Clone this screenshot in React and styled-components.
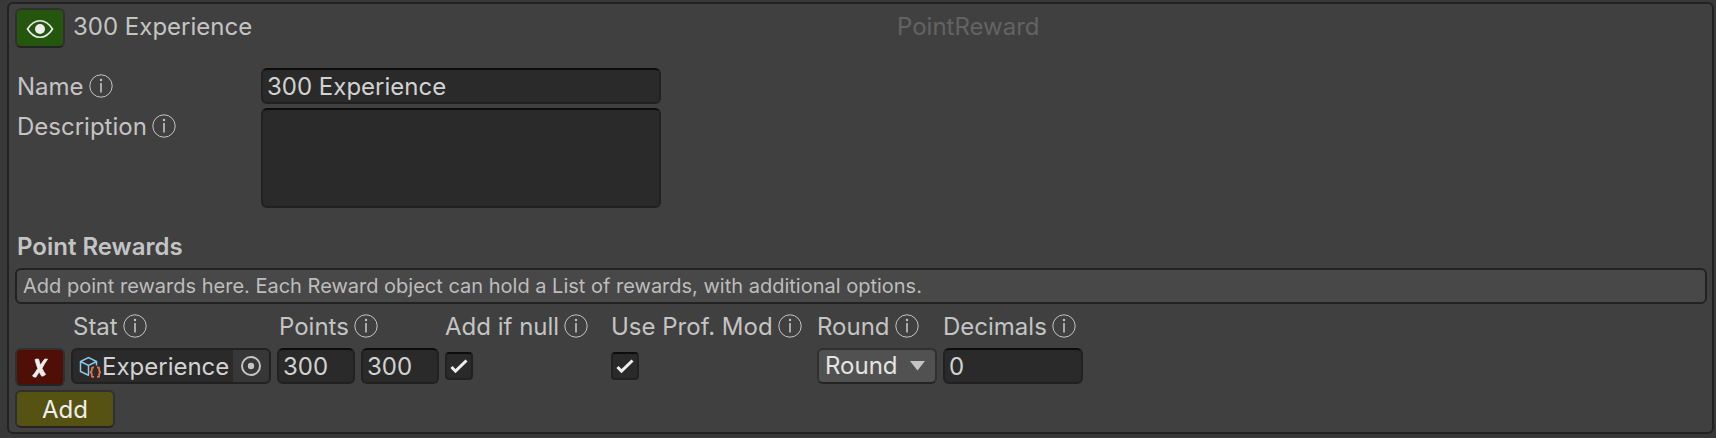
import React, { useState } from 'react'
import styled, { createGlobalStyle } from 'styled-components'

const GlobalStyle = createGlobalStyle`
  * {
    box-sizing: border-box;
  }

  body {
    margin: 0;
    background-color: #383838;
    color: #c4c4c4;
    font-family: Inter, 'Liberation Sans', sans-serif;
    font-size: 24px;
    line-height: 38px;
  }

  button,
  input,
  select,
  textarea {
    margin: 0;
    color: inherit;
    font: inherit;
  }
`

const Panel = styled.main`
  display: flex;
  flex-direction: column;
  gap: 20px;
  margin: 2px 2px 2px 7px;
  padding: 4px 5px 4px 6px;
  border: 2px solid #222;
  border-radius: 6px;
  background-color: #404040;
`

const Header = styled.header`
  display: grid;
  grid-template-columns: 50px 1fr 1fr;
  gap: 6px;
`

const Title = styled.h1`
  margin: 0;
  padding-left: 2px;
  font-size: 24px;
  font-weight: 400;
`

const TypeName = styled.span`
  padding-left: 5px;
  color: #636363;
`

const Button = styled.button`
  display: flex;
  align-items: center;
  justify-content: center;
  width: ${({ $width }) => $width || 50}px;
  height: ${({ $height }) => $height || 38}px;
  padding: 2px 0 0;
  border: 2px solid #303030;
  border-bottom-color: #242424;
  border-radius: 6px;
  background-color: ${({ $color }) => $color};
  color: #eee;
`

const Fields = styled.div`
  display: grid;
  grid-template-columns: 240px 400px;
  gap: 4px 6px;
`

const Label = styled.label`
  display: flex;
  align-self: start;
  gap: 5px;
  height: 36px;
  padding-left: ${({ $flush }) => ($flush ? 0 : 2)}px;
  white-space: nowrap;

  svg {
    margin-top: 6px;
  }
`

const Input = styled.input`
  width: 100%;
  min-width: 0;
  height: 36px;
  padding: 2px 4px 0;
  border: 2px solid #212121;
  border-top-color: #0d0d0d;
  border-radius: 6px;
  outline: none;
  background-color: #2a2a2a;
  color: #d2d2d2;
`

const TextArea = styled(Input)`
  display: block;
  height: 100px;
  resize: none;
`

const Section = styled.section`
  display: flex;
  flex-direction: column;
  gap: 4px;
`

const SectionTitle = styled.h2`
  height: 36px;
  margin: 0;
  padding-left: 2px;
  font-size: 24px;
  font-weight: 600;
`

const HelpBox = styled.p`
  margin: 0;
  padding: 0 6px;
  border: 2px solid #222;
  border-radius: 6px;
  background-color: #484848;
  color: #bdbdbd;
  font-size: 20px;
  line-height: 32px;
`

const Rewards = styled.div`
  display: grid;
  grid-template-columns: 50px 200px 162px 160px 200px 120px 140px;
  gap: 4px 6px;
`

const PointInputs = styled.div`
  display: grid;
  grid-template-columns: 1fr 1fr;
  gap: 6px;
`

const ObjectField = styled.div`
  display: flex;
  height: 36px;
  overflow: hidden;
  border: 2px solid #212121;
  border-radius: 6px;
  background-color: #2a2a2a;
  color: #d2d2d2;
`

const ObjectName = styled.span`
  display: flex;
  flex: 1;
  align-items: center;
  gap: 1px;
  padding: 2px 0 0 6px;
`

const Picker = styled.button`
  display: flex;
  align-items: center;
  justify-content: center;
  width: 36px;
  padding: 0;
  border: 0;
  background-color: #373737;
`

const Toggle = styled.span`
  display: grid;
  align-self: start;
  width: 28px;
  height: 28px;
  margin: 4px 0;

  > * {
    grid-area: 1 / 1;
  }

  svg {
    pointer-events: none;
  }
`

const Checkbox = styled.input`
  width: 28px;
  height: 28px;
  appearance: none;
  border: 2px solid #212121;
  border-top-color: #0d0d0d;
  border-radius: 4px;
  background-color: #2a2a2a;

  &:not(:checked) + svg {
    display: none;
  }
`

const Dropdown = styled.span`
  display: grid;
  align-items: center;
  height: 36px;

  > * {
    grid-area: 1 / 1;
  }

  svg {
    justify-self: end;
    margin-right: 12px;
    pointer-events: none;
  }
`

const Select = styled.select`
  width: 100%;
  height: 36px;
  padding: 0 6px 1px;
  appearance: none;
  border: 2px solid #303030;
  border-bottom-color: #242424;
  border-radius: 6px;
  background-color: #515151;
  color: #e4e4e4;
  line-height: 30px;
`

const InfoIcon = () => (
  <svg width="24" height="24" viewBox="0 0 24 24" fill="none" stroke="#c4c4c4">
    <circle cx="12" cy="12" r="11.2" />
    <path d="M12 9v9.5" strokeWidth="1.6" />
    <circle cx="12" cy="6" r="1.2" fill="#c4c4c4" stroke="none" />
  </svg>
)

const EyeIcon = () => (
  <svg width="28" height="20" viewBox="0 0 28 20" fill="none">
    <path
      d="M1.500 10C5 4.500 9 1.700 14 1.700S23 4.500 26.500 10C23 15.500 19 18.300 14 18.300S5 15.500 1.500 10Z"
      stroke="#eee"
      strokeWidth="1.6"
    />
    <circle cx="14" cy="10" r="5" fill="#eee" />
  </svg>
)

const CrossIcon = () => (
  <svg
    width="16"
    height="20"
    viewBox="0 0 16 20"
    fill="#eee"
    stroke="#eee"
    strokeWidth="0.8"
  >
    <path d="M3 1.500Q5.200 .600 6.600 1.200Q7.400 4.500 8.500 7.200Q10.500 3.500 12.800 1L15.500 1.200Q12.500 5.500 10 10.200Q11.300 13.500 13.600 16.400Q11.600 18 9.800 18.200Q8.300 16.300 7.300 13.800Q5.600 16.500 3.800 19.200Q2 19.200 .500 18Q3.500 14.300 5.800 10.400Q4.200 6.300 3 1.500Z" />
  </svg>
)

const CheckIcon = () => (
  <svg width="28" height="28" viewBox="0 0 28 28" fill="none">
    <path d="M6.500 15l4 4.200L21.500 8.500" stroke="#eee" strokeWidth="3" />
  </svg>
)

const ArrowIcon = () => (
  <svg width="15" height="10" viewBox="0 0 15 10">
    <path d="M0 0h15L7.500 9.500Z" fill="#c4c4c4" />
  </svg>
)

const PickerIcon = () => (
  <svg width="22" height="22" viewBox="0 0 22 22" fill="none">
    <circle cx="11" cy="11" r="9" stroke="#c4c4c4" strokeWidth="2" />
    <circle cx="11" cy="11" r="3.2" fill="#c4c4c4" />
  </svg>
)

const AssetIcon = () => (
  <svg width="22" height="22" viewBox="0 0 22 22" fill="none">
    <path
      d="M10 19.500L1.500 15.500V5.500L9.500 1.500L17.500 5.500V9.500M1.500 5.500L9.500 9.500L17.500 5.500M9.500 9.500V19"
      stroke="#8cc8ee"
      strokeWidth="1.5"
    />
    <path
      d="M15 11.500h-1.200q-1 0-1 1v2.300l-1.300 1.400 1.300 1.400v2.300q0 1 1 1H15M18 11.500h1.200q1 0 1 1v2.300l1.300 1.400-1.300 1.400v2.300q0 1-1 1H18"
      stroke="#e8703f"
      strokeWidth="1.8"
    />
  </svg>
)

const CheckToggle = ({ id }) => (
  <Toggle>
    <Checkbox type="checkbox" id={id} defaultChecked />
    <CheckIcon />
  </Toggle>
)

const columns = [
  { id: 'stat', title: 'Stat' },
  { id: 'points', title: 'Points' },
  { id: 'addIfNull', title: 'Add if null', flush: true },
  { id: 'profMod', title: 'Use Prof. Mod', flush: true },
  { id: 'round', title: 'Round', flush: true },
  { id: 'decimals', title: 'Decimals', flush: true },
]

const App = () => {
  const [name, setName] = useState('300 Experience')

  return (
    <>
      <GlobalStyle />
      <Panel>
        <Header>
          <Button $color="#24560e" $height={40} aria-label="Show">
            <EyeIcon />
          </Button>
          <Title>{name}</Title>
          <TypeName>PointReward</TypeName>
        </Header>

        <Fields>
          <Label htmlFor="name">
            Name <InfoIcon />
          </Label>
          <Input
            id="name"
            value={name}
            onChange={(e) => setName(e.target.value)}
          />
          <Label htmlFor="description">
            Description <InfoIcon />
          </Label>
          <TextArea as="textarea" id="description" />
        </Fields>

        <Section>
          <SectionTitle>Point Rewards</SectionTitle>
          <HelpBox>
            Add point rewards here. Each Reward object can hold a List of
            rewards, with additional options.
          </HelpBox>
          <Rewards>
            <span />
            {columns.map(({ id, title, flush }) => (
              <Label key={id} htmlFor={id} $flush={flush}>
                {title} <InfoIcon />
              </Label>
            ))}
            <Button $color="#4f0e06" aria-label="Remove">
              <CrossIcon />
            </Button>
            <ObjectField>
              <ObjectName>
                <AssetIcon />
                Experience
              </ObjectName>
              <Picker id="stat">
                <PickerIcon />
              </Picker>
            </ObjectField>
            <PointInputs>
              <Input id="points" defaultValue="300" />
              <Input aria-label="Points" defaultValue="300" />
            </PointInputs>
            <CheckToggle id="addIfNull" />
            <CheckToggle id="profMod" />
            <Dropdown>
              <Select id="round" defaultValue="Round">
                <option>Round</option>
              </Select>
              <ArrowIcon />
            </Dropdown>
            <Input id="decimals" defaultValue="0" />
          </Rewards>
          <Button $color="#555212" $width={100}>
            Add
          </Button>
        </Section>
      </Panel>
    </>
  )
}

export default App
